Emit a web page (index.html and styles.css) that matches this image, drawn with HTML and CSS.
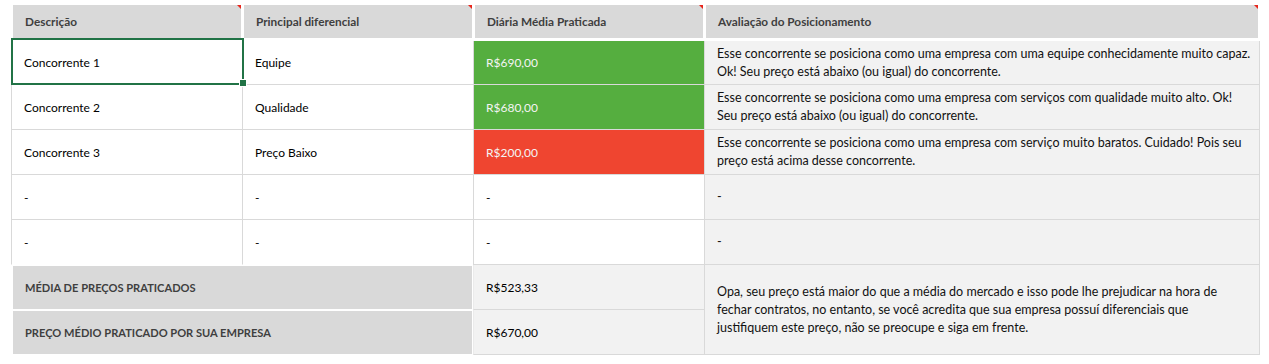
FILE: index.html
```html
<!DOCTYPE html>
<html lang="pt-BR">
<head>
<meta charset="utf-8">
<title>Concorrentes</title>
<link rel="stylesheet" href="styles.css">
</head>
<body>
<div class="sheet">
  <div class="hcell"><div class="head">Descrição<span class="flag"></span></div></div>
  <div class="hcell"><div class="head">Principal diferencial<span class="flag"></span></div></div>
  <div class="hcell"><div class="head">Diária Média Praticada<span class="flag"></span></div></div>
  <div class="hcell"><div class="head head-last">Avaliação do Posicionamento<span class="flag"></span></div></div>

  <div class="cell selected-host">Concorrente 1<span class="selection"><span class="handle"></span></span></div>
  <div class="cell">Equipe</div>
  <div class="cell price good">R$690,00</div>
  <div class="cell note"><span class="lines">Esse concorrente se posiciona como uma empresa com uma equipe conhecidamente muito capaz.<br>Ok! Seu preço está abaixo (ou igual) do concorrente.</span></div>

  <div class="cell">Concorrente 2</div>
  <div class="cell">Qualidade</div>
  <div class="cell price good">R$680,00</div>
  <div class="cell note"><span class="lines">Esse concorrente se posiciona como uma empresa com serviços com qualidade muito alto. Ok!<br>Seu preço está abaixo (ou igual) do concorrente.</span></div>

  <div class="cell">Concorrente 3</div>
  <div class="cell">Preço Baixo</div>
  <div class="cell price bad">R$200,00</div>
  <div class="cell note"><span class="lines">Esse concorrente se posiciona como uma empresa com serviço muito baratos. Cuidado! Pois seu<br>preço está acima desse concorrente.</span></div>

  <div class="cell">-</div>
  <div class="cell">-</div>
  <div class="cell price">-</div>
  <div class="cell note">-</div>

  <div class="cell open">-</div>
  <div class="cell open">-</div>
  <div class="cell price">-</div>
  <div class="cell note">-</div>

  <div class="label">MÉDIA DE PREÇOS PRATICADOS</div>
  <div class="cell value">R$523,33</div>
  <div class="cell note summary"><span class="lines">Opa, seu preço está maior do que a média do mercado e isso pode lhe prejudicar na hora de<br>fechar contratos, no entanto, se você acredita que sua empresa possuí diferenciais que<br>justifiquem este preço, não se preocupe e siga em frente.</span></div>

  <div class="label">PREÇO MÉDIO PRATICADO POR SUA EMPRESA</div>
  <div class="cell value">R$670,00</div>
</div>
</body>
</html>
```
FILE: styles.css
```css
html, body {
  margin: 0;
  background: #ffffff;
}

body {
  font-family: "Lato", "Open Sans", sans-serif;
  font-size: 12px;
  color: #000000;
}

.sheet {
  display: grid;
  grid-template-columns: 231px 231px 231px 556px;
  grid-template-rows: 36px 44px 45px 45px 45px 45px 45px 45px;
  padding: 5px 0 0 11px;
}

.hcell {
  display: flex;
  align-items: flex-start;
}

.head {
  position: relative;
  box-sizing: border-box;
  flex: 1;
  height: 33px;
  margin: 0 1px 0 2px;
  padding-left: 12px;
  display: flex;
  align-items: center;
  background: #d9d9d9;
  color: #3f3f3f;
  font-weight: 700;
  font-size: 11.8px;
}

.head-last {
  margin-right: 2px;
}

.flag {
  position: absolute;
  top: 0;
  right: 0;
  width: 0;
  height: 0;
  border-top: 4px solid #e8251b;
  border-left: 4px solid transparent;
}

.cell {
  box-sizing: border-box;
  display: flex;
  align-items: center;
  padding-left: 12px;
  border-left: 1px solid #d9d9d9;
  border-bottom: 1px solid #d9d9d9;
  white-space: nowrap;
}

.cell.open {
  border-bottom-color: #ffffff;
}

.price.good {
  background: #55ae3f;
  color: #f4f4f4;
}

.price.bad {
  background: #ef4530;
  color: #f4f4f4;
}

.note {
  background: #f2f2f2;
  border-right: 1px solid #d9d9d9;
  font-size: 12.5px;
  line-height: 18px;
  color: #111111;
}

.lines {
  display: block;
  white-space: nowrap;
}

.summary {
  grid-column: 4;
  grid-row: 7 / span 2;
}

.label {
  grid-column: 1 / span 2;
  box-sizing: border-box;
  margin: 1px 1px 1px 2px;
  padding-left: 12px;
  display: flex;
  align-items: center;
  background: #d9d9d9;
  color: #3f3f3f;
  font-weight: 700;
  font-size: 11.1px;
}

.value {
  background: #f2f2f2;
  border-left-color: #ebebeb;
}

.selected-host {
  position: relative;
}

.selection {
  position: absolute;
  left: -1px;
  top: -3px;
  width: 233px;
  height: 47px;
  box-sizing: border-box;
  border: 2px solid #217346;
  pointer-events: none;
}

.handle {
  position: absolute;
  right: -4px;
  bottom: -3px;
  width: 6px;
  height: 6px;
  background: #217346;
  box-shadow: 0 0 0 1px #ffffff;
}
```
